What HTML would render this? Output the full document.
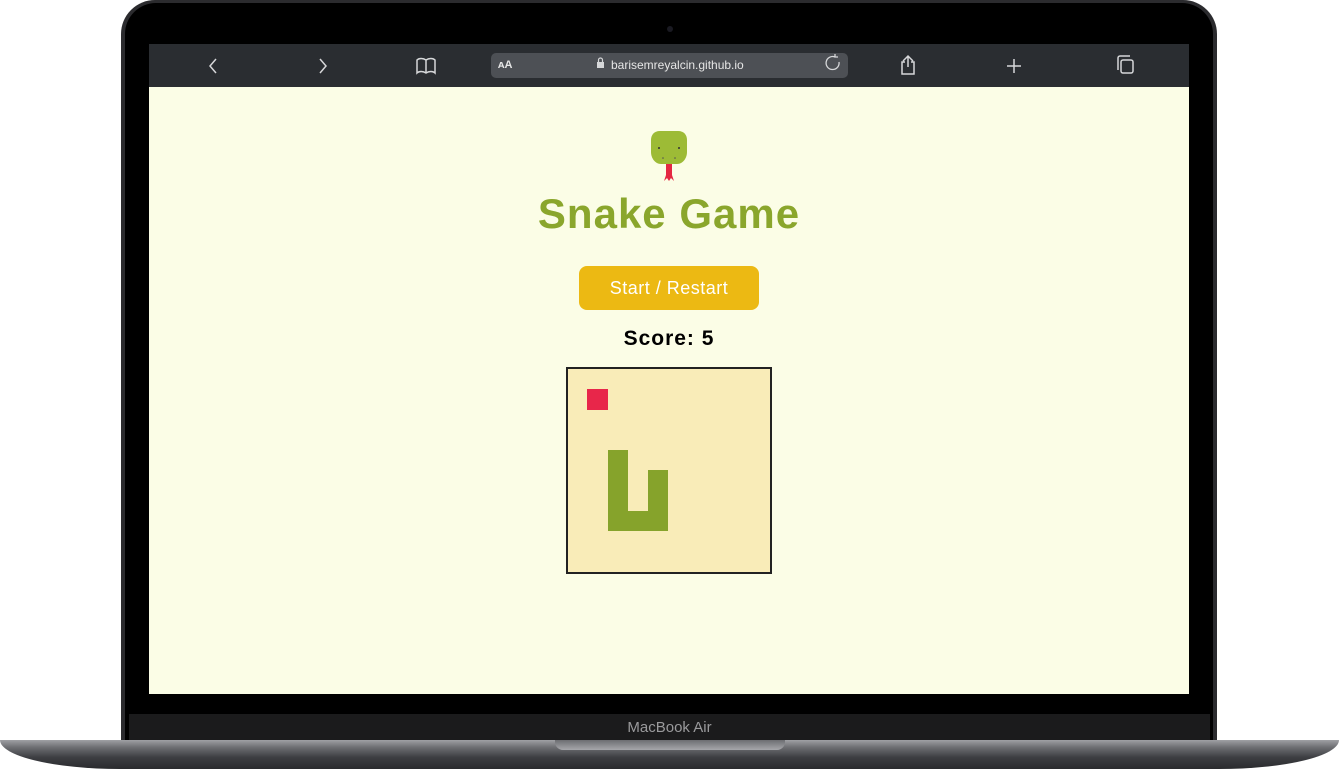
<!DOCTYPE html><html><head><style>
body{margin:0;width:1339px;height:769px;background:#fff;position:relative;overflow:hidden;font-family:"Liberation Sans",sans-serif}
.a{position:absolute}
</style></head><body>
<div class="a" style="left:121px;top:0;width:1096px;height:745px;background:#2b2b2e;border-radius:34px 34px 0 0"></div>
<div class="a" style="left:125px;top:3px;width:1088px;height:742px;background:#000;border-radius:31px 31px 0 0"></div>
<div class="a" style="left:667px;top:26px;width:6px;height:6px;border-radius:50%;background:#1a1a22"></div>
<div class="a" style="left:129px;top:714px;width:1081px;height:28px;background:#1b1b1c"></div>
<div class="a" style="left:129px;top:719px;width:1081px;text-align:center;color:#9a9a9c;font-size:15px">MacBook Air</div>
<div class="a" style="left:0;top:740px;width:1339px;height:29px;background:linear-gradient(#9fa0a4,#6e6f73 25%,#3d3e42 60%,#2a2b2e);border-radius:0 0 120px 120px/0 0 29px 29px"></div>
<div class="a" style="left:555px;top:740px;width:230px;height:10px;background:linear-gradient(#6c6d71,#a6a7ab);border-radius:0 0 8px 8px"></div>
<div class="a" style="left:149px;top:44px;width:1040px;height:650px;background:#fbfde6"></div>
<div class="a" style="left:149px;top:44px;width:1040px;height:43px;background:#2a2d31"></div>
<svg class="a" style="left:149px;top:44px" width="1040" height="43" fill="none" stroke="#d6d7d9" stroke-width="1.5">
<path d="M67 15l-6 7 6 7M171 15l6 7-6 7"/>
<path d="M277 16v13M277 16c-3-2-7-2-9 0v13c2-2 6-2 9 0c3-2 7-2 9 0V16c-2-2-6-2-9 0"/>
<rect x="342" y="9" width="357" height="25" rx="5" fill="#4d5055" stroke="none"/>
<path d="M690 18a6.5 6.5 0 1 1-4-5M686 10v3h3" stroke-width="1.3"/>
<path d="M754 17l5-5 5 5M759 12v11M756 18h-3v12h12V18h-3"/>
<path d="M865 15v14M858 22h14"/>
<rect x="972" y="16" width="12" height="13" rx="2"/><path d="M969 26V14a2 2 0 0 1 2-2h10"/>
<rect x="448" y="18" width="7" height="6" fill="#d6d7d9" stroke="none"/><path d="M449.5 18v-2a2 2 0 0 1 4 0v2" stroke-width="1.2"/>
</svg>
<div class="a" style="left:498px;top:59px;color:#e6e6e6;font-size:11px;font-weight:bold">ᴀA</div>
<div class="a" style="left:611px;top:58px;color:#e6e6e6;font-size:12px">barisemreyalcin.github.io</div>
<svg class="a" style="left:648px;top:129px" width="42" height="56">
<path d="M12 2h18c6 0 9 4 9 9v12c0 6-4 12-10 12H13C7 35 3 29 3 23V11c0-5 3-9 9-9z" fill="#9dbb36"/>
<circle cx="11" cy="19" r="1" fill="#333"/><circle cx="31" cy="19" r="1" fill="#333"/>
<circle cx="15" cy="29" r=".8" fill="#555"/><circle cx="27" cy="29" r=".8" fill="#555"/>
<path d="M18 35h6v11l2 6-3-3-2 3-2-3-3 3 2-6z" fill="#e42742"/>
</svg>
<div class="a" style="left:400px;top:190px;width:538px;text-align:center;color:#8aa62c;font-size:42px;font-weight:bold;letter-spacing:1px">Snake Game</div>
<div class="a" style="left:579px;top:266px;width:180px;height:44px;background:#ecb913;border-radius:8px;color:#fff;font-size:18px;line-height:44px;text-align:center;letter-spacing:.5px">Start / Restart</div>
<div class="a" style="left:569px;top:327px;width:200px;text-align:center;color:#000;font-size:21px;font-weight:bold;letter-spacing:1px">Score: 5</div>
<div class="a" style="left:566px;top:367px;width:202px;height:203px;border:2px solid #222;background:#f9ecb8"></div>
<div class="a" style="left:587px;top:389px;width:21px;height:21px;background:#e8264a"></div>
<div class="a" style="left:608px;top:450px;width:20px;height:81px;background:#86a32b"></div>
<div class="a" style="left:608px;top:511px;width:60px;height:20px;background:#86a32b"></div>
<div class="a" style="left:648px;top:470px;width:20px;height:61px;background:#86a32b"></div>
</body></html>
